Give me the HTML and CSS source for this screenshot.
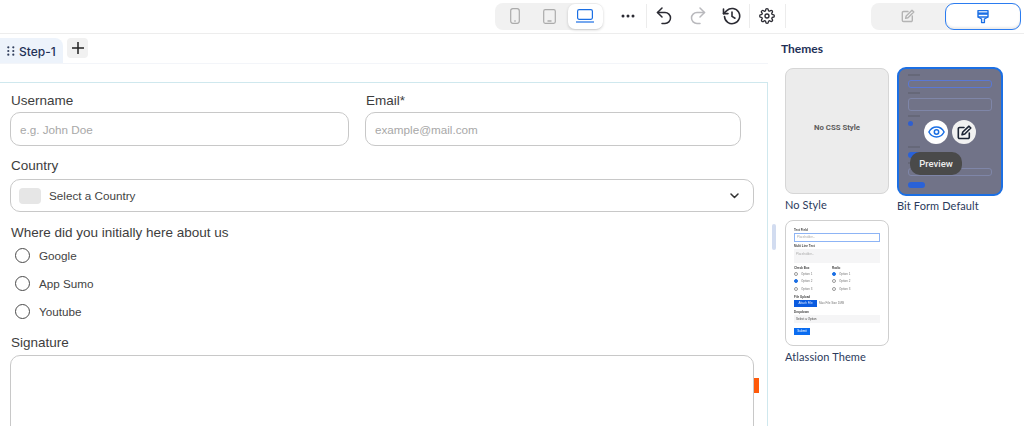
FILE: index.html
```html
<!DOCTYPE html>
<html lang="en">
<head>
<meta charset="utf-8">
<title>Form builder</title>
<link rel="stylesheet" href="styles.css">
</head>
<body>
<header class="toolbar">
  <div class="devices">
    <span class="device"><svg width="10" height="16" viewBox="0 0 10 16" fill="none" stroke="#ababab" stroke-width="1.2"><rect x=".7" y=".7" width="8.600" height="14.600" rx="2.200"/><path d="M4 13h2"/></svg></span>
    <span class="device"><svg width="13" height="15" viewBox="0 0 13 15" fill="none" stroke="#ababab" stroke-width="1.2"><rect x=".7" y=".7" width="11.600" height="13.600" rx="1.500"/><path d="M4.500 12h4" stroke-width="1.500"/></svg></span>
    <span class="device device-active"><svg width="18" height="14" viewBox="0 0 18 14" fill="none" stroke="#1b6fe4" stroke-width="1.200"><rect x="1.600" y=".7" width="14.800" height="9.600" rx="1.500"/><path d="M0 13h18"/></svg></span>
  </div>
  <span class="tool tool-dots"><svg width="14" height="4" viewBox="0 0 14 4" fill="#2b2b33"><circle cx="2" cy="2" r="1.500"/><circle cx="7" cy="2" r="1.500"/><circle cx="12" cy="2" r="1.500"/></svg></span>
  <span class="sep"></span>
  <span class="tool tool-undo"><svg width="16" height="18" viewBox="0 0 16 18" fill="none" stroke="#2b2b33" stroke-width="1.500" stroke-linecap="round" stroke-linejoin="round"><path d="M6 1 1.500 5.500 6 10"/><path d="M1.500 5.500H9a5.500 5.500 0 0 1 0 11H6"/></svg></span>
  <span class="tool tool-redo"><svg width="16" height="18" viewBox="0 0 16 18" fill="none" stroke="#b9b9bd" stroke-width="1.500" stroke-linecap="round" stroke-linejoin="round"><path d="M10 1l4.500 4.500L10 10"/><path d="M14.500 5.500H7a5.500 5.500 0 0 0 0 11h3"/></svg></span>
  <span class="tool tool-history"><svg width="19" height="18" viewBox="0 0 19 18" fill="none" stroke="#2b2b33" stroke-width="1.600" stroke-linecap="round" stroke-linejoin="round"><path d="M2.500 9.500A7.600 7.600 0 1 0 4.800 3.600L1.500 6.600"/><path d="M1.500 2v4.600H6"/><path d="M10 5v4.400l3 1.800"/></svg></span>
  <span class="sep sep-gear"></span>
  <span class="tool tool-gear"><svg width="16" height="16" viewBox="0 0 24 24" fill="none" stroke="#2b2b33" stroke-width="2" stroke-linecap="round" stroke-linejoin="round"><circle cx="12" cy="12" r="3"/><path d="M19.400 15a1.650 1.650 0 0 0 .33 1.820l.06.06a2 2 0 1 1-2.830 2.830l-.06-.06a1.650 1.650 0 0 0-2.820 1.170V21a2 2 0 0 1-4 0v-.09A1.650 1.650 0 0 0 7.180 19.700l-.06.06a2 2 0 1 1-2.830-2.830l.06-.06a1.650 1.650 0 0 0-1.170-2.820H3a2 2 0 0 1 0-4h.09A1.650 1.650 0 0 0 4.300 7.180l-.06-.06a2 2 0 1 1 2.830-2.830l.06.06a1.650 1.650 0 0 0 2.820-1.170V3a2 2 0 0 1 4 0v.09a1.650 1.650 0 0 0 2.820 1.170l.06-.06a2 2 0 1 1 2.830 2.830l-.06.06a1.650 1.650 0 0 0 1.170 2.820H21a2 2 0 0 1 0 4h-.09a1.650 1.650 0 0 0-1.510 1z"/></svg></span>
  <span class="sep"></span>
  <div class="modes">
    <span class="mode"><svg width="14" height="14" viewBox="0 0 14 14" fill="none" stroke="#b4b4b4" stroke-width="1.400" stroke-linecap="round" stroke-linejoin="round"><path d="M7 2.500H2.500a1.200 1.200 0 0 0-1.200 1.200v7.600a1.200 1.200 0 0 0 1.200 1.200h7.600a1.200 1.200 0 0 0 1.200-1.200V7"/><path d="M11 1.200l1.800 1.800L7 8.800l-2.400.6.6-2.400z"/></svg></span>
    <span class="mode mode-active"><svg width="12" height="15" viewBox="0 0 12 15" fill="none" stroke="#1b6fe4" stroke-width="1.400" stroke-linejoin="round"><path d="M1 1.600h10v6.400H1z"/><path d="M1 4.600h10" stroke-width="2.400"/><path d="M1 8l3.600 2v3.600h2.800V10L11 8"/></svg></span>
  </div>
</header>

<div class="workspace">
  <main class="canvas">
    <nav class="tabs">
      <span class="tab"><svg class="grip" width="8" height="10" viewBox="0 0 8 10" fill="#33415e"><circle cx="1.300" cy="1.300" r="1.100"/><circle cx="6.300" cy="1.300" r="1.100"/><circle cx="1.300" cy="5" r="1.100"/><circle cx="6.300" cy="5" r="1.100"/><circle cx="1.300" cy="8.700" r="1.100"/><circle cx="6.300" cy="8.700" r="1.100"/></svg>Step-1</span>
      <span class="add"><svg width="12" height="12" viewBox="0 0 12 12" stroke="#222" stroke-width="1.500"><path d="M6 0v12M0 6h12"/></svg></span>
    </nav>

    <form class="form">
      <div class="row-two">
        <div class="field">
          <div class="label">Username</div>
          <div class="input input-user">e.g. John Doe</div>
        </div>
        <div class="field">
          <div class="label">Email*</div>
          <div class="input input-email">example@mail.com</div>
        </div>
      </div>
      <div class="label label-country">Country</div>
      <div class="select">
        <span class="flag"></span>
        <span class="select-text">Select a Country</span>
        <svg class="chev" width="9" height="6" viewBox="0 0 9 6" fill="none" stroke="#333" stroke-width="1.500" stroke-linecap="round" stroke-linejoin="round"><path d="M1 1l3.500 3.500L8 1"/></svg>
      </div>
      <div class="label label-where">Where did you initially here about us</div>
      <div class="radio"><span class="dot"></span>Google</div>
      <div class="radio"><span class="dot"></span>App Sumo</div>
      <div class="radio"><span class="dot"></span>Youtube</div>
      <div class="label label-sign">Signature</div>
      <div class="sign-wrap">
        <div class="signature"></div>
        <span class="marker"></span>
      </div>
    </form>
  </main>

  <aside class="panel">
    <span class="scroll-thumb"></span>
    <h2 class="panel-title">Themes</h2>
    <div class="themes">
      <div class="theme">
        <div class="card card-none">No CSS Style</div>
        <div class="caption">No Style</div>
      </div>
      <div class="theme">
        <div class="card card-selected">
          <div class="mini mini-default">
            <div class="m-label"></div><div class="m-box m-box-blue"></div>
            <div class="m-label"></div><div class="m-box m-box-tall"></div>
            <div class="m-label"></div><div class="m-check"></div>
            <div class="m-label"></div><div class="m-btn m-btn-wide"></div>
            <div class="m-label"></div><div class="m-box"></div>
            <div class="m-btn m-submit"></div>
          </div>
          <span class="round round-eye"><svg width="17" height="12" viewBox="0 0 17 12" fill="none" stroke="#1b6fe4" stroke-width="1.500"><path d="M.9 6C2.600 2.800 5.300 1 8.500 1s5.900 1.800 7.600 5c-1.700 3.200-4.400 5-7.600 5S2.600 9.200.9 6z"/><circle cx="8.500" cy="6" r="2.200"/></svg></span>
          <span class="round round-edit"><svg width="15" height="15" viewBox="0 0 15 15" fill="none" stroke="#1c2434" stroke-width="1.600" stroke-linecap="round" stroke-linejoin="round"><path d="M7 2.500H2.500A1.200 1.200 0 0 0 1.300 3.700v8.600a1.200 1.200 0 0 0 1.200 1.200h8.600a1.200 1.200 0 0 0 1.200-1.200V8"/><path d="M12 1.200l1.800 1.800L7.800 9l-2.800.8.800-2.800z"/></svg></span>
          <span class="tip">Preview</span>
        </div>
        <div class="caption">Bit Form Default</div>
      </div>
      <div class="theme">
        <div class="card card-atlassian">
          <div class="mini mini-atl">
            <div class="a-label">Text Field</div>
            <div class="a-box a-box-blue">Placeholder...</div>
            <div class="a-label">Multi Line Text</div>
            <div class="a-box a-box-tall">Placeholder...</div>
            <div class="a-cols">
              <div><div class="a-label">Check Box</div><div class="a-opt"><i class="a-dot"></i>Option 1</div><div class="a-opt"><i class="a-dot a-dot-on"></i>Option 2</div><div class="a-opt"><i class="a-dot"></i>Option 3</div></div>
              <div><div class="a-label">Radio</div><div class="a-opt"><i class="a-dot a-dot-on"></i>Option 1</div><div class="a-opt"><i class="a-dot"></i>Option 2</div><div class="a-opt"><i class="a-dot"></i>Option 3</div></div>
            </div>
            <div class="a-label">File Upload</div>
            <div class="a-file"><span class="a-attach">Attach File</span><span>Max File Size 1MB</span></div>
            <div class="a-label a-label-drop">Dropdown</div>
            <div class="a-box a-select">Select a Option</div>
            <span class="a-submit">Submit</span>
          </div>
        </div>
        <div class="caption">Atlassion Theme</div>
      </div>
    </div>
  </aside>
</div>
</body>
</html>
```
FILE: styles.css
```css
* { box-sizing: border-box; }
html, body { margin: 0; height: 426px; overflow: hidden; background: #fff; }
body { font-family: "Liberation Sans", Arial, sans-serif; color: #3d3d3d; }

/* top bar */
.toolbar { height: 34px; display: flex; align-items: center; padding: 0 3px 1px 495px; border-bottom: 1px solid #ededed; }
.devices { width: 108px; height: 27px; display: flex; align-items: center; background: #f1f1f1; border-radius: 8px; padding-left: 2px; }
.device { width: 36px; height: 25px; display: flex; align-items: center; justify-content: center; }
.device-active { width: 36px; background: #fff; border-radius: 7px; box-shadow: 0 1px 3px rgba(0,0,0,.18); }
.tool { display: flex; align-items: center; justify-content: center; height: 24px; }
.tool-dots { margin-left: 18px; }
.tool-undo { margin-left: 9px; }
.tool-redo { margin-left: 18px; }
.tool-history { margin-left: 16px; }
.tool-gear { margin-left: 9px; }
.sep { width: 1px; height: 24px; background: #ececec; margin-left: 11px; }
.sep-gear { margin-left: 8px; }
.tool-gear + .sep { margin-left: 10px; }
.modes { margin-left: auto; width: 150px; height: 27px; display: flex; background: #f1f1f1; border-radius: 8px; }
.mode { flex: 1; display: flex; align-items: center; justify-content: center; }
.mode-active { flex: 0 0 76px; background: #fff; border: 1.500px solid #2b7cf0; border-radius: 9px; box-shadow: inset 0 -2px 2px rgba(0,0,0,.08); }

.workspace { display: flex; height: 392px; }

/* canvas */
.canvas { width: 768px; flex: none; }
.tabs { height: 30px; display: flex; gap: 4px; padding-top: 4px; border-bottom: 1px solid #f3f5f9; }
.tab { width: 63px; height: 25px; display: flex; align-items: center; gap: 4px; padding: 1px 0 0 7px; background: #edf3fb; border-radius: 0 8px 0 0; font: 500 12px Inter, sans-serif; color: #1f3157; }
.grip { flex: none; }
.add { width: 21px; height: 20px; display: flex; align-items: center; justify-content: center; background: #f1f1f1; border-radius: 4px; }

.form { margin-top: 18px; height: 344px; padding: 9px 0 0 10px; border-top: 1px solid #cfe8ee; border-right: 1px solid #cfe8ee; }
.row-two { display: flex; gap: 16px; }
.label { padding-left: 1px; font-size: 13.500px; line-height: 18px; color: #3d3d3d; }
.input { height: 34px; margin-top: 2px; padding-left: 9px; display: flex; align-items: center; border: 1px solid #c8c8c8; border-radius: 10px; font-size: 11.700px; color: #a8a8a8; }
.input-user { width: 339px; }
.input-email { width: 376px; }
.label-country { margin-top: 11px; }
.select { width: 744px; height: 33px; margin-top: 4px; padding: 0 14px 0 8px; display: flex; align-items: center; border: 1px solid #c8c8c8; border-radius: 10px; font-size: 11.700px; color: #444; }
.flag { width: 22px; height: 16px; background: #e6e6e6; border-radius: 4px; }
.select-text { margin-left: 8px; }
.chev { margin-left: auto; }
.label-where { margin-top: 12px; }
.radio { height: 28px; display: flex; align-items: center; gap: 9px; padding-left: 5px; font-size: 11.700px; color: #444; }
.label-where + .radio { margin-top: -1px; }
.dot { width: 15px; height: 15px; border: 1.400px solid #4a4a4a; border-radius: 50%; }
.label-sign { margin-top: 9px; }
.sign-wrap { position: relative; margin-top: 3px; }
.signature { width: 744px; height: 90px; border: 1px solid #c8c8c8; border-radius: 10px; }
.marker { position: absolute; left: 744px; top: 23px; width: 5px; height: 15px; background: #ff5a0a; }

/* right panel */
.panel { position: relative; flex: 1; padding-left: 13px; }
.scroll-thumb { position: absolute; left: 4px; top: 190px; width: 4px; height: 26px; background: #d2dcf0; border-radius: 2px; }
.panel-title { margin: 8px 0 0; font: 700 12px/14px Lato, sans-serif; color: #1f3157; }
.themes { display: grid; grid-template-columns: 104px 106px; column-gap: 8px; row-gap: 6px; margin: 11px 0 0 4px; align-items: start; }
.theme { display: flex; flex-direction: column; }
.card { position: relative; width: 104px; height: 126px; margin-top: 1px; border: 1px solid #d6d6d6; border-radius: 8px; overflow: hidden; }
.card-none { display: flex; align-items: center; justify-content: center; background: #ececec; font: 700 7.800px Roboto, sans-serif; color: #5d5d5d; padding-bottom: 8px; }
.card-selected { width: 106px; height: 129px; margin-top: 0; border: 2px solid #1b6fe4; border-radius: 9px; background: #717388; }
.card-atlassian { background: #fff; border-color: #cfcfcf; }
.caption { margin-top: 4px; font: 400 11px/14px Lato, sans-serif; color: #2b3a5c; letter-spacing: .1px; }
.card-selected + .caption { margin-top: 3px; }

.mini { filter: blur(.7px); }
.mini-default { padding: 5px 9px; }
.m-label { width: 12px; height: 2px; margin: 4px 0 4px; background: #666879; }
.m-label:first-child { margin-top: 0; }
.m-box { height: 8px; border: 1px solid #7f86a8; border-radius: 3px; }
.m-box-blue { border-color: #5a78d4; }
.m-box-tall { height: 13px; }
.m-check { width: 40px; height: 21px; }
.m-check::before { content: ""; display: block; width: 5px; height: 5px; background: #2f5fd0; border-radius: 50%; }
.m-btn { width: 17px; height: 6px; background: #2a62d8; border-radius: 3px; }
.m-btn-wide { width: 25px; }
.m-submit { margin-top: 6px; }
.round { position: absolute; top: 51px; width: 24px; height: 24px; display: flex; align-items: center; justify-content: center; background: #fff; border-radius: 50%; }
.round-eye { left: 25px; }
.round-edit { left: 53px; background: #f1f1f1; }
.tip { position: absolute; left: 11px; top: 83px; width: 52px; height: 23px; display: flex; align-items: center; justify-content: center; background: #4a4a4a; border-radius: 10px; font: 500 9.500px Roboto, sans-serif; color: #eee; }

.mini-atl { padding: 7px 8px 0 8px; font: 3px/4px "Liberation Sans", sans-serif; color: #777; filter: blur(.6px); }
.a-label { font-weight: 700; font-size: 3px; line-height: 4px; margin-top: 2px; color: #444; }
.a-cols .a-label, .a-label:first-child { margin-top: 0; }
.a-box { height: 9px; margin-top: 1px; padding-left: 2px; line-height: 8px; background: #f5f5f6; color: #aaa; }
.a-box-blue { background: #fff; border: 1px solid #8db4f5; line-height: 7px; }
.a-box-tall { height: 14px; line-height: 10px; }
.a-cols { display: flex; gap: 22px; margin-top: 3px; }
.a-cols > div { width: 16px; }
.a-opt { display: flex; align-items: center; gap: 3px; height: 7.500px; white-space: nowrap; }
.a-dot { width: 4px; height: 4px; border: .5px solid #999; border-radius: 50%; flex: none; }
.a-dot-on { background: #1b6fe4; border-color: #1b6fe4; }
.a-file { display: flex; align-items: center; gap: 2px; margin-top: 1px; white-space: nowrap; }
.a-attach { width: 23px; height: 7px; line-height: 7px; text-align: center; background: #0a5be0; color: #dfe9ff; }
.a-label-drop { margin-top: 3px; }
.a-select { height: 8px; color: #444; line-height: 8px; }
.a-submit { display: block; width: 16px; height: 7px; margin-top: 5px; line-height: 7px; text-align: center; background: #0a6cf0; color: #fff; }
```
